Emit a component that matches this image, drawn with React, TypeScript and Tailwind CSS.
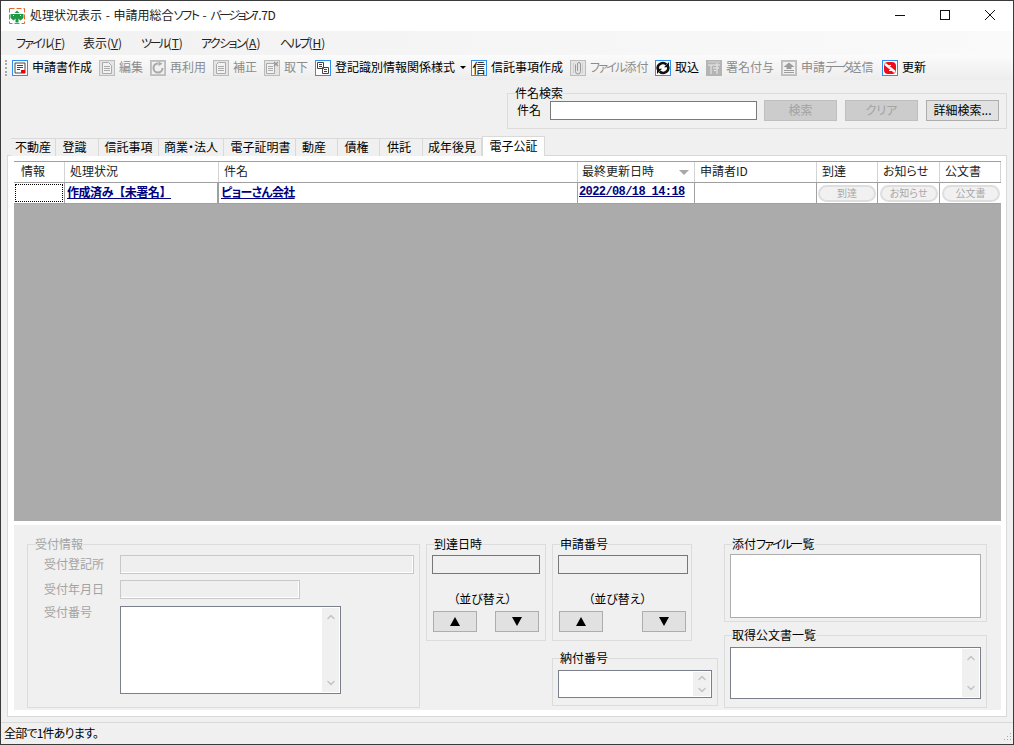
import { ChevronDown, ChevronUp } from 'lucide-react';
import type { ReactNode } from 'react';

const BLUE = '#2f8ff0';
const GRAY = '#bcbcbc';

// kana in the original font is narrower than Noto's
const K = ({ children }: { children: ReactNode }) => <span className="tracking-[-1.75px]">{children}</span>;

const Frame = ({ on, children }: { on?: boolean; children: ReactNode }) => (
  <svg width="16" height="16" viewBox="0 0 16 16" className="shrink-0">
    <rect x="0.5" y="0.5" width="15" height="15" fill={on ? '#fff' : '#e4e4e4'} stroke={on ? BLUE : GRAY} />
    {children}
  </svg>
);

const icons: Record<string, ReactNode> = {
  create: (
    <Frame on>
      <path d="M3 3h10v10H3z" fill="none" stroke="#444" />
      <path d="M5 5.5h6M5 7.5h6M5 9.5h3" stroke="#444" />
      <rect x="9" y="10" width="4" height="3" fill="#e8000f" />
    </Frame>
  ),
  edit: (
    <Frame>
      <path d="M3.5 2.5h6l3 3v8h-9z" fill="#f2f2f2" stroke="#aaa" />
      <path d="M5 6.5h6M5 8.5h6M5 10.5h6" stroke="#aaa" />
    </Frame>
  ),
  reuse: (
    <Frame>
      <rect x="1.5" y="1.5" width="13" height="13" fill="#f0f0f0" stroke="#c4c4c4" />
      <path d="M8 3.5a4.5 4.5 0 1 0 4.5 4.5" fill="none" stroke="#a8a8a8" strokeWidth="2" />
      <path d="M8.5 1.5v4.5l4-2.2z" fill="#a8a8a8" />
    </Frame>
  ),
  fix: (
    <Frame>
      <path d="M5.5 2.5h7v11h-9v-9z" fill="#f2f2f2" stroke="#aaa" />
      <path d="M5 6.5h6M5 8.5h6M5 10.5h6" stroke="#aaa" />
    </Frame>
  ),
  withdraw: (
    <Frame>
      <path d="M2.5 3.5h8v10h-8z" fill="#f2f2f2" stroke="#aaa" />
      <path d="M4 6.5h5M4 8.5h5M4 10.5h5" stroke="#aaa" />
      <path d="M10 2l4 4M14 2l-4 4" stroke="#999" strokeWidth="1.4" />
    </Frame>
  ),
  relation: (
    <Frame on>
      <path d="M2.5 2.5h6v6h-6zM7.5 7.5h6v6h-6z" fill="#fff" stroke="#444" />
      <path d="M4 4.5h3M4 6.5h3M9 9.5h3M9 11.5h3" stroke="#444" />
    </Frame>
  ),
  clip: (
    <Frame>
      <path d="M5.5 4.5v7a2.5 2.5 0 0 0 5 0v-7.5a1.5 1.5 0 0 0-3 0v7" fill="none" stroke="#9a9a9a" />
      <path d="M3.5 3v10M12.5 3v10" stroke="#cfcfcf" />
    </Frame>
  ),
  sync: (
    <Frame on>
      <path d="M2.8 9.5a5.2 5.2 0 0 1 8.6-5" fill="none" stroke="#111" strokeWidth="2.6" />
      <path d="M13.2 6.5a5.2 5.2 0 0 1-8.6 5" fill="none" stroke="#111" strokeWidth="2.6" />
      <path d="M9 7.2h5V2zM7 8.8H2V14z" fill="#111" />
    </Frame>
  ),
  sign: (
    <svg width="16" height="16" viewBox="0 0 16 16" className="shrink-0">
      <rect width="16" height="16" fill="#b4b4b4" />
      <path d="M2 5h12M5 5v9M11 3v11M7 8h6M8 10.5h2" stroke="#ececec" />
      <path d="M2 2h12" stroke="#d6d6d6" />
    </svg>
  ),
  send: (
    <Frame>
      <rect x="1.5" y="1.5" width="13" height="13" fill="#f0f0f0" stroke="#c4c4c4" />
      <path d="M8 2.5l5.5 4.5H10.5v2h-5V7H2.5z" fill="#9c9c9c" />
      <path d="M3 10.5h10M3 12.5h10" stroke="#9c9c9c" />
    </Frame>
  ),
  refresh: (
    <Frame on>
      <rect x="2" y="2" width="12" height="12" rx="4" fill="#ee0d1a" />
      <path d="M3 4l10 8" stroke="#fff" strokeWidth="2.4" />
      <path d="M4 5.5h5M12 10.5H7" stroke="#fff" strokeWidth="1.2" />
    </Frame>
  ),
  trust: (
    <span className="flex h-4 w-4 shrink-0 items-center justify-center border border-[#2f8ff0] bg-white text-[13px] leading-none">
      信
    </span>
  ),
};

const toolbar = [
  { id: 'create', label: '申請書作成', on: true, cls: 'w-[87px]' },
  { id: 'edit', label: '編集', cls: 'w-[51px]' },
  { id: 'reuse', label: '再利用', cls: 'w-[63px]' },
  { id: 'fix', label: '補正', cls: 'w-[51px]' },
  { id: 'withdraw', label: '取下', cls: 'w-[51px]' },
  { id: 'relation', label: '登記識別情報関係様式', on: true, cls: 'w-[156px]' },
  { id: 'trust', label: '信託事項作成', on: true, cls: 'w-[99px]' },
  { id: 'clip', label: <><K>ファイル</K>添付</>, cls: 'w-[85px]' },
  { id: 'sync', label: '取込', on: true, cls: 'w-[51px]' },
  { id: 'sign', label: '署名付与', cls: 'w-[75px]' },
  { id: 'send', label: <>申請<span className="tracking-[-3px]">データ</span>送信</>, cls: 'w-[101px]' },
  { id: 'refresh', label: '更新', on: true, cls: 'w-[43px]' },
];

const tabs = [
  { label: '不動産', cls: 'w-[45px]' },
  { label: '登識', cls: 'w-[43px] pr-[5px]' },
  { label: '信託事項', cls: 'w-[60px]' },
  { label: '商業・法人', cls: 'w-[65px]' },
  { label: '電子証明書', cls: 'w-[72px] pl-[2px]' },
  { label: '動産', cls: 'w-[42px] pr-[5px]' },
  { label: '債権', cls: 'w-[42px] pr-[4px]' },
  { label: '供託', cls: 'w-[43px] pr-[4px]' },
  { label: '成年後見', cls: 'w-[59px]' },
];

const menus = [
  { label: 'ファイル', key: 'F', cls: 'w-[67px]', kana: 'tracking-[-1.75px]' },
  { label: '表示', key: 'V', cls: 'w-[58px]', kana: '' },
  { label: 'ツール', key: 'T', cls: 'w-[60px]', kana: 'tracking-[-2.5px]' },
  { label: 'アクション', key: 'A', cls: 'w-[79px]', kana: 'tracking-[-1.6px]' },
  { label: 'ヘルプ', key: 'H', cls: 'w-[60px]', kana: 'tracking-[-2px]' },
];

const columns = [
  { label: '情報', cls: 'w-[51px] pl-[7px]' },
  { label: '処理状況', cls: 'w-[154px] pl-[5px]' },
  { label: '件名', cls: 'w-[359px] pl-[5px]' },
  { label: '最終更新日時', cls: 'w-[117px] pl-[4px]', sort: true },
  { label: '申請者ID', cls: 'w-[122px] pl-[5px]' },
  { label: '到達', cls: 'w-[61px] pl-[5px]' },
  { label: 'お知らせ', cls: 'w-[62px] pl-[5px]' },
  { label: '公文書', cls: 'w-[61px] pl-[5px]' },
];

const Group = ({ title, off, cls, children }: { title: ReactNode; off?: boolean; cls: string; children: ReactNode }) => (
  <fieldset className={`border border-[#dcdcdc] ${cls}`}>
    <legend className={`ml-[7px] bg-[#f0f0f0] text-[12px] leading-[14px] ${off ? 'text-[#a3a3a3]' : 'text-black'}`}>{title}</legend>
    {children}
  </fieldset>
);

const Scrollbar = ({ tall }: { tall?: boolean }) => (
  <div className={`flex h-full w-[17px] flex-col items-center justify-between bg-[#f0f0f0] text-[#c4c4c4] ${tall ? 'py-[3px]' : ''}`}>
    <ChevronUp size={12} strokeWidth={3} />
    <ChevronDown size={12} strokeWidth={3} />
  </div>
);

const Arrow = ({ down }: { down?: boolean }) => (
  <button className="flex h-[21px] w-[44px] items-center justify-center border border-[#adadad] bg-[#e1e1e1]">
    <svg width="10" height="9" viewBox="0 0 10 9">
      <path d={down ? 'M0 0h10L5 9z' : 'M5 0l5 9H0z'} fill="#000" />
    </svg>
  </button>
);

const PillButton = ({ label, cls }: { label: string; cls: string }) => (
  <div className={`flex items-center justify-center ${cls}`}>
    <span className="flex h-[17px] w-[58px] items-center justify-center rounded-full border-2 border-[#dedede] bg-[#f1f1f1] text-[10px] text-[#a8a8a8]">
      {label}
    </span>
  </div>
);

const App = () => {
  return (
    <div className="flex h-[745px] w-[1014px] flex-col overflow-hidden border border-[#3a3a3a] bg-[#f0f0f0] font-['Noto_Sans_CJK_JP',sans-serif] text-[12px] leading-[14px] text-black [font-feature-settings:'palt']">
      {/* Title bar */}
      <div className="flex h-[30px] shrink-0 items-center bg-white">
        <svg width="16" height="16" viewBox="0 0 16 16" className="ml-[8px] mr-[5px]">
          <rect x="0.5" y="0.5" width="15" height="15" fill="#fff" stroke="#e8622a" strokeDasharray="5 2" />
          <path d="M8 2.5l2.5 2.5h-5z" fill="#1f9a44" />
          <path d="M1.5 6h13v4l-3 2.5L8 9.5l-3.500 3-3-2.500z" fill="#1f9a44" />
          <path d="M6.500 9h3v5.500h-3z" fill="#1f9a44" />
          <path d="M4 7.500h1M11 7.500h1" stroke="#fff" />
        </svg>
        <span className="mb-[2px] whitespace-nowrap text-[#222] [word-spacing:1px]">
          処理状況表示 - 申請用総合<span className="tracking-[-1.3px]">ソフト</span> - <span className="tracking-[-2.5px]">バージョン</span><span className="tracking-[-0.4px]">7.7D</span>
        </span>
        <div className="ml-auto mr-px flex pb-[2px]">
          <div className="flex h-[28px] w-[45px] items-center justify-center">
            <svg width="10" height="10" viewBox="0 0 10 10">
              <path d="M0 5.500h10" stroke="#111" />
            </svg>
          </div>
          <div className="flex h-[28px] w-[45px] items-center justify-center">
            <svg width="10" height="10" viewBox="0 0 10 10">
              <rect x="0.5" y="0.5" width="9" height="9" fill="none" stroke="#111" />
            </svg>
          </div>
          <div className="flex h-[28px] w-[45px] items-center justify-center">
            <svg width="10" height="10" viewBox="0 0 10 10">
              <path d="M0 0l10 10M10 0L0 10" stroke="#111" />
            </svg>
          </div>
        </div>
      </div>

      {/* Menu */}
      <div className="flex h-[24px] shrink-0 items-center bg-gradient-to-r from-[#f1f1f1] to-[#fafafa] pl-[15px]">
        {menus.map((m) => (
          <span key={m.key} className={`whitespace-nowrap text-[#222] ${m.cls}`}>
            <span className={m.kana}>{m.label}</span>(<span className="underline">{m.key}</span>)
          </span>
        ))}
      </div>

      {/* Toolbar */}
      <div className="flex h-[25px] shrink-0 items-center bg-gradient-to-b from-[#fbfbfb] to-[#ededed] pl-[4px]">
        <div className="mr-[5px] h-[16px] w-[2px] border-l-2 border-dotted border-[#a8a8a8]" />
        {toolbar.map((t) => (
          <div key={t.id} className={`flex shrink-0 items-center gap-[4px] whitespace-nowrap ${t.cls} ${t.on ? 'text-black' : 'text-[#8c8c8c]'}`}>
            {icons[t.id]}
            <span className="mb-[2px]">{t.label}</span>
            {t.id === 'relation' && <span className="ml-[1px] h-0 w-0 border-x-[3px] border-t-[3px] border-x-transparent border-t-black" />}
          </div>
        ))}
      </div>

      {/* Search */}
      <Group title="件名検索" cls="ml-[506px] mt-[6px] h-[43px] w-[500px] shrink-0">
        <div className="flex h-[21px] items-center pl-[9px]">
          <span className="mb-[2px] w-[33px]">件名</span>
          <input className="h-[19px] w-[207px] border border-[#7a7a7a] bg-white" />
          <button className="ml-[7px] h-[21px] w-[73px] border border-[#bfbfbf] bg-[#cccccc] pb-[2px] text-[#a3a3a3]">検索</button>
          <button className="ml-[8px] h-[21px] w-[73px] border border-[#bfbfbf] bg-[#cccccc] pb-[2px] text-[#a3a3a3]">クリア</button>
          <button className="ml-[8px] h-[21px] w-[73px] border border-[#adadad] bg-[#e1e1e1] pb-[2px]">詳細検索...</button>
        </div>
      </Group>

      {/* Tabs */}
      <div className="relative z-10 -mb-px mt-[7px] flex h-[20px] shrink-0 items-end pl-[10px]">
        {tabs.map((t) => (
          <div key={t.label} className={`flex h-[18px] items-center justify-center border-r border-t border-[#d9d9d9] bg-[#f0f0f0] pb-[2px] ${t.cls}`}>
            {t.label}
          </div>
        ))}
        <div className="flex h-[20px] w-[63px] items-center justify-center border-x border-t border-[#d9d9d9] bg-white pb-[2px]">電子公証</div>
      </div>

      {/* Tab page */}
      <div className="ml-[6px] flex h-[562px] w-[1000px] shrink-0 flex-col border border-[#d9d9d9] bg-white pb-[6px] pl-[6px] pr-[5px] pt-[5px]">
        <div className="flex h-[360px] flex-col border-t border-[#a0a0a0] bg-[#ababab]">
          <div className="flex h-[20px] shrink-0 bg-white">
            {columns.map((c) => (
              <div key={c.label} className={`relative flex items-center border-r border-[#d4d4d4] pb-[2px] text-[#222] ${c.cls}`}>
                {c.label}
                {c.sort && <span className="absolute right-[5px] top-[8px] h-0 w-0 border-x-[5px] border-t-[5px] border-x-transparent border-t-[#a8a8a8]" />}
              </div>
            ))}
          </div>
          <div className="flex h-[22px] shrink-0 border-y border-[#a0a0a0] bg-white font-bold text-[#000080]">
            <div className="w-[51px] border-r border-[#a0a0a0] p-px">
              <div className="h-full border border-dotted border-black" />
            </div>
            <div className="flex w-[154px] items-center border-r-2 border-[#a0a0a0] pb-[2px] pl-[2px]">
              <span className="whitespace-nowrap tracking-[-0.45px] underline [font-feature-settings:normal]">作成済み【未署名】</span>
            </div>
            <div className="flex w-[359px] items-center border-r border-[#a0a0a0] pb-[2px] pl-[2px]">
              <span className="tracking-[-0.7px] underline">ピョーさん会社</span>
            </div>
            <div className="flex w-[117px] items-center border-r border-[#a0a0a0] pb-[2px] pl-[1px] font-['Liberation_Mono',monospace] text-[12px] tracking-[-0.6px]">
              <span className="underline">2022/08/18 14:18</span>
            </div>
            <div className="w-[122px] border-r border-[#a0a0a0]" />
            <PillButton label="到達" cls="w-[61px] border-r border-[#a0a0a0] font-normal" />
            <PillButton label="お知らせ" cls="w-[62px] border-r border-[#a0a0a0] font-normal" />
            <PillButton label="公文書" cls="w-[61px] font-normal" />
          </div>
        </div>

        {/* Detail panel */}
        <div className="mt-[4px] flex h-[185px] shrink-0 gap-[6px] bg-[#f0f0f0] pl-[13px] pt-[12px]">
          <Group title="受付情報" off cls="h-[171px] w-[393px]">
            <div className="flex flex-col gap-[6px] pl-[16px] pt-[4px] text-[#a3a3a3]">
              <div className="flex items-center">
                <span className="mb-[2px] w-[76px]">受付登記所</span>
                <div className="h-[19px] w-[294px] border border-[#c8c8c8] bg-[#efefef] shadow-[inset_-1px_-1px_0_#fff]" />
              </div>
              <div className="flex items-center">
                <span className="mb-[2px] w-[76px]">受付年月日</span>
                <div className="h-[19px] w-[180px] border border-[#c8c8c8] bg-[#efefef] shadow-[inset_-1px_-1px_0_#fff]" />
              </div>
              <div className="mt-px flex items-start">
                <span className="-mt-px w-[76px]">受付番号</span>
                <div className="flex h-[88px] w-[221px] justify-end border border-[#7a7f8a] bg-white p-px">
                  <Scrollbar tall />
                </div>
              </div>
            </div>
          </Group>

          <Group title="到達日時" cls="h-[104px] w-[120px]">
            <div className="pl-[5px] pt-[4px]">
              <div className="h-[19px] w-[108px] border border-[#777] bg-[#f0f0f0]" />
              <div className="mt-[18px] pr-[12px] text-center">（並び替え）</div>
              <div className="mt-[5px] flex gap-[18px] pl-px">
                <Arrow />
                <Arrow down />
              </div>
            </div>
          </Group>

          <div className="flex w-[166px] flex-col gap-[10px]">
            <Group title="申請番号" cls="h-[104px] w-[140px]">
              <div className="pl-[5px] pt-[4px]">
                <div className="h-[19px] w-[130px] border border-[#777] bg-[#f0f0f0]" />
                <div className="mt-[18px] pr-[14px] text-center">（並び替え）</div>
                <div className="mt-[5px] flex gap-[39px] pl-px">
                  <Arrow />
                  <Arrow down />
                </div>
              </div>
            </Group>
            <Group title="納付番号" cls="h-[55px] w-[166px]">
              <div className="pl-[5px] pt-[5px]">
                <div className="flex h-[28px] w-[154px] justify-end border border-[#7a7f8a] bg-white p-px">
                  <Scrollbar />
                </div>
              </div>
            </Group>
          </div>

          <div className="flex w-[263px] flex-col gap-[6px]">
            <Group title={<>添付<K>ファイル</K>一覧</>} cls="h-[85px] w-[263px]">
              <div className="pl-[5px] pt-[3px]">
                <div className="h-[64px] w-[251px] border border-[#adadad] bg-white" />
              </div>
            </Group>
            <Group title="取得公文書一覧" cls="h-[80px] w-[263px]">
              <div className="pl-[5px] pt-[5px]">
                <div className="flex h-[52px] w-[251px] justify-end border border-[#7a7f8a] bg-white p-px">
                  <Scrollbar tall />
                </div>
              </div>
            </Group>
          </div>
        </div>
      </div>

      {/* Status bar */}
      <div className="relative mt-[5px] flex flex-1 items-center border-t border-[#d9d9d9] pb-[2px] pl-[3px]">
        <span className="tracking-[-0.8px]">全部で1件あります。</span>
        <svg width="11" height="11" viewBox="0 0 11 11" className="absolute bottom-px right-px">
          <path d="M9 1h1v1H9zM6 4h1v1H6zM9 4h1v1H9zM3 7h1v1H3zM6 7h1v1H6zM9 7h1v1H9z" fill="#a8a8a8" />
        </svg>
      </div>
    </div>
  );
};

export default App;
